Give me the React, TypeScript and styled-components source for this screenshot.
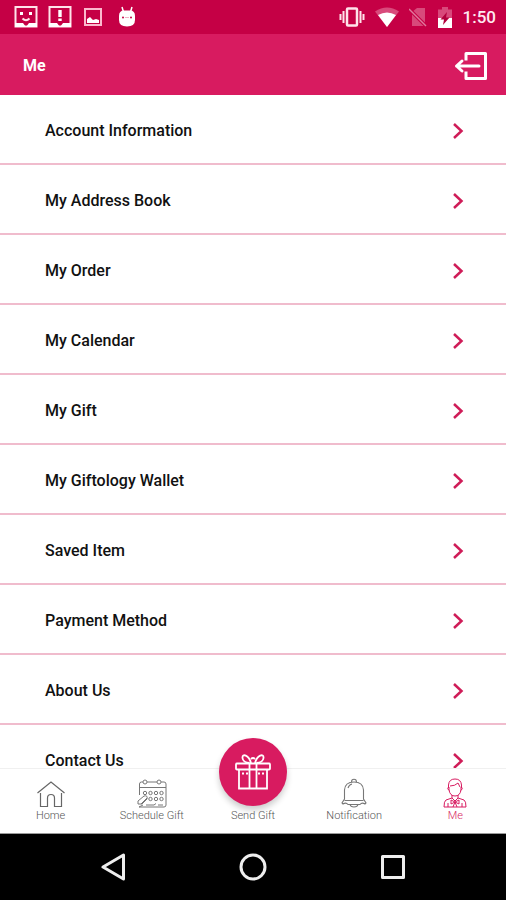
import React from "react";
import styled, { createGlobalStyle } from "styled-components";

const GlobalStyle = createGlobalStyle`
  * { box-sizing: border-box; }
  body { margin: 0; background: #fff; font-family: Roboto, "Liberation Sans", sans-serif; }
  svg { display: block; flex: none; }
`;

const brand = "#d81b60";

const Screen = styled.div`
  display: flex;
  flex-direction: column;
  height: 100vh;
  background: #fff;
`;

const StatusBar = styled.div`
  display: flex;
  justify-content: space-between;
  align-items: center;
  flex: none;
  height: 34px;
  padding: 0 10px 0 14px;
  background: #c50045;
  color: #fff;
`;

const StatusGroup = styled.div<{ $gap: number }>`
  display: flex;
  align-items: center;
  gap: ${(p) => p.$gap}px;
`;

const Clock = styled.time`
  font-size: 17px;
  font-weight: 500;
  line-height: 20px;
  color: #ffe9f0;
`;

const Header = styled.header`
  display: flex;
  justify-content: space-between;
  align-items: center;
  flex: none;
  height: 61px;
  padding: 2px 18px 0 23px;
  background: ${brand};
  color: #fff;
`;

const Title = styled.h1`
  margin: 0;
  font-size: 16px;
  font-weight: 700;
  line-height: 20px;
`;

const IconButton = styled.button`
  padding: 0;
  border: 0;
  background: none;
  color: inherit;
  cursor: pointer;
`;

const Main = styled.main`
  flex: 1;
  min-height: 0;
  overflow: hidden;
`;

const Menu = styled.ul`
  margin: 0;
  padding: 0;
  list-style: none;
`;

const MenuItem = styled.li`
  border-bottom: 2px solid #f0bccd;
`;

const MenuLink = styled.a`
  display: flex;
  justify-content: space-between;
  align-items: center;
  height: 68px;
  padding: 4px 42px 0 45px;
  color: #111;
  font-size: 16px;
  font-weight: 500;
  line-height: 16px;
  text-decoration: none;
`;

const TabBar = styled.nav`
  display: grid;
  grid-template-columns: repeat(5, 1fr);
  grid-template-rows: minmax(0, 1fr);
  position: relative;
  flex: none;
  height: 66px;
  border-top: 1px solid #f0f0f0;
  border-bottom: 1px solid #9a9a9a;
  background: #fff;
`;

const Tab = styled.a<{ $active?: boolean }>`
  display: flex;
  flex-direction: column;
  align-items: center;
  justify-content: flex-end;
  gap: 1px;
  min-height: 0;
  padding-bottom: 10px;
  color: ${(p) => (p.$active ? brand : "#555")};
  font-size: 11px;
  font-weight: 300;
  line-height: 14px;
  white-space: nowrap;
  text-decoration: none;
`;

const GiftBadge = styled.span`
  display: flex;
  align-items: center;
  justify-content: center;
  width: 68px;
  height: 68px;
  margin-bottom: 2px;
  flex: none;
  border-radius: 50%;
  background: ${brand};
  color: #fff;
  box-shadow: 0 4px 6px rgba(0, 0, 0, 0.2);
`;

const SystemBar = styled.div`
  display: grid;
  grid-template-columns: repeat(3, 140px);
  justify-content: center;
  justify-items: center;
  align-items: center;
  flex: none;
  height: 66px;
  background: #000;
  color: #eee;
`;

const menu = [
  "Account Information",
  "My Address Book",
  "My Order",
  "My Calendar",
  "My Gift",
  "My Giftology Wallet",
  "Saved Item",
  "Payment Method",
  "About Us",
  "Contact Us",
];

const SmileIcon = () => (
  <svg width="24" height="24" viewBox="0 0 24 24" fill="none" stroke="#ffe3ea" strokeWidth="2">
    <path d="M1.500 2h21v19.500h-21z" />
    <path d="M1 18h8l3 4 3-4h8v4H1z" fill="#fff" stroke="none" />
    <path d="M6 7h3v3H6zM15 7h3v3h-3z" fill="#fff" stroke="none" />
    <path d="M8.500 13.500q3.500 3.500 7 0" />
  </svg>
);

const AlertIcon = () => (
  <svg width="24" height="24" viewBox="0 0 24 24" fill="none" stroke="#ffe3ea" strokeWidth="2">
    <path d="M1.500 2h21v19.500h-21z" />
    <path d="M1 18h8l3 4 3-4h8v4H1z" fill="#fff" stroke="none" />
    <path d="M10.300 5h3.400v7h-3.400zM10.300 13.500h3.400v2.500h-3.400z" fill="#fff" stroke="none" />
  </svg>
);

const PictureIcon = () => (
  <svg width="18" height="18" viewBox="0 0 18 18" fill="none" stroke="#fbb9cd" strokeWidth="2">
    <path d="M1 1h16v16H1z" />
    <path d="M3 15v-4l3-2 3 3 3-1 3 1v3z" fill="#fff" stroke="none" />
  </svg>
);

const RobotIcon = () => (
  <svg width="18" height="22" viewBox="0 0 18 22">
    <path d="M4 1l1.500 5M14 1l-1.500 5" stroke="#fff" strokeWidth="1.500" />
    <path d="M1 10Q1 4.500 6 4.500h6q5 0 5 5.500v4q0 6.500-8 6.500T1 14z" fill="#fff" />
    <circle cx="5" cy="11.500" r="1" fill="#c50045" />
    <circle cx="13" cy="11.500" r="1" fill="#c50045" />
    <path d="M7 11.500h4" stroke="#f3b0c5" />
  </svg>
);

const VibrateIcon = () => (
  <svg width="26" height="20" viewBox="0 0 26 20" fill="none" stroke="#ffe3ea">
    <rect x="8" y="1.500" width="10" height="17" rx="1" strokeWidth="2.500" />
    <path d="M4.500 4v12M21.500 4v12" strokeWidth="2" />
    <path d="M1.500 7v6M24.500 7v6" strokeWidth="2" />
  </svg>
);

const WifiIcon = () => (
  <svg width="24" height="20" viewBox="0 0 24 20">
    <path d="M0 4.500Q12-3.500 24 4.500L12 20z" fill="#d84a7b" />
    <path d="M3 8q9-5 18 0l-9 12z" fill="#fff" />
  </svg>
);

const NoSimIcon = () => (
  <svg width="18" height="20" viewBox="0 0 18 20">
    <path d="M3 5l5-4h8v18H3z" fill="#d84a7b" />
    <path d="M0 2l17 17" stroke="#c50045" strokeWidth="3.500" />
    <path d="M0 2l17 17" stroke="#e07a9d" strokeWidth="1.500" />
  </svg>
);

const BatteryIcon = () => (
  <svg width="16" height="21" viewBox="0 0 16 21">
    <path d="M1 2.500h4V0h6v2.500h4V11H1z" fill="#d84a7b" />
    <path d="M1 11h14v10H1z" fill="#fff" />
    <path d="M10 5l-6.500 7.500H7L6 18l6.500-7.500H9z" fill="#b1003c" />
  </svg>
);

const LogoutIcon = () => (
  <svg width="34" height="30" viewBox="0 0 34 30" fill="none" stroke="currentColor" strokeWidth="3">
    <path d="M12 9.500V2.500h19.500v25H12v-7" strokeLinejoin="round" />
    <path d="M25 15H2.500M8 10L2.500 15 8 20" strokeLinecap="round" strokeLinejoin="round" />
  </svg>
);

const ChevronIcon = () => (
  <svg width="12" height="18" viewBox="0 0 12 18" fill="none" stroke="#cf1c58" strokeWidth="2.500">
    <path d="M2 2l7.500 7L2 16" />
  </svg>
);

const HomeIcon = () => (
  <svg width="30" height="28" viewBox="0 0 30 28" fill="none" stroke="#666" strokeWidth="1.200">
    <path d="M1.500 13L15 2l13.500 11" />
    <path d="M4.500 13v13.500h7V18q0-3.500 3.500-3.500t3.500 3.500v8.500h7V13" />
  </svg>
);

const ScheduleIcon = () => (
  <svg width="30" height="29" viewBox="0 0 30 29" fill="none" stroke="#777">
    <path d="M2.500 16V5q0-2 2-2H6M10 3h10M24 3h3q2 0 2 2v21q0 2-2 2H2M2.500 8.500h26.500" />
    <circle cx="8" cy="3" r="2" />
    <circle cx="22" cy="3" r="2" />
    <g>
      <circle cx="8" cy="14" r="1.700" />
      <circle cx="13.500" cy="14" r="1.700" />
      <circle cx="19" cy="14" r="1.700" />
      <circle cx="24.500" cy="14" r="1.700" />
      <circle cx="13.500" cy="20" r="1.700" />
      <circle cx="19" cy="20" r="1.700" />
      <circle cx="24.500" cy="20" r="1.700" />
    </g>
    <path d="M1 22l6-5q4-1 3 3l-5 5H1zM4 25l6-6M2 28l4-2M9 26h8l2-1.500M21 26h5" />
  </svg>
);

const GiftIcon = () => (
  <svg width="36" height="36" viewBox="0 0 36 36" fill="none" stroke="currentColor" strokeWidth="1.800">
    <rect x="1" y="9.500" width="34" height="6" rx="1" />
    <path d="M4 15.500V34.500h28V15.500M14.500 9.500v25M21.500 9.500v25" />
    <path d="M16 9C14 1 7-1 7.500 4q.5 4.500 7 5M20 9C22 1 29-1 28.500 4q-.5 4.500-7 5M16 5q2-2 4 0" />
    <path d="M7 19.500h2M11 19.500h2M23 19.500h2M27 19.500h2" />
  </svg>
);

const BellIcon = () => (
  <svg width="28" height="30" viewBox="0 0 28 30" fill="none" stroke="#777" strokeWidth="1.100">
    <path d="M11.500 4q0-2.800 2.500-2.800T16.500 4M4.500 21v-9Q5 4 14 4t9.500 8v9l2.500 4-1 1q-3-2-5 .5H8q-2-2.500-5-.5l-1-1z" />
    <path d="M8 10q1-3.500 4-4M4.500 22.500h19M10 26.500q.5 2.500 4 2.500t4-2.500" />
  </svg>
);

const PersonIcon = () => (
  <svg width="24" height="30" viewBox="0 0 24 30" fill="none" stroke={brand} strokeWidth="1">
    <path d="M5.500 10V7Q6 1 12 1t6.500 6v3M7 8q5 0 8-3l2 4" />
    <path d="M6 9v3q1 6 6 6t6-6V9M5.500 9q-2 2 .8 3.500M18.500 9q2 2-.8 3.500" />
    <path d="M9 17v3l-6 2q-2 1-2 7h22q0-6-2-7l-6-2v-3M9 20l3 3 3-3M5 25v4M19 25v4" />
    <path d="M8 22l4 2 4-2v4l-4-2-4 2zM12 24l-2 5M12 24l2 5" />
  </svg>
);

export default function App() {
  return (
    <Screen>
      <GlobalStyle />
      <StatusBar>
        <StatusGroup $gap={12}>
          <StatusGroup $gap={10}>
            <SmileIcon />
            <AlertIcon />
          </StatusGroup>
          <StatusGroup $gap={16}>
            <PictureIcon />
            <RobotIcon />
          </StatusGroup>
        </StatusGroup>
        <StatusGroup $gap={10}>
          <VibrateIcon />
          <WifiIcon />
          <NoSimIcon />
          <BatteryIcon />
          <Clock>1:50</Clock>
        </StatusGroup>
      </StatusBar>
      <Header>
        <Title>Me</Title>
        <IconButton type="button" aria-label="Log out">
          <LogoutIcon />
        </IconButton>
      </Header>
      <Main>
        <Menu>
          {menu.map((label) => (
            <MenuItem key={label}>
              <MenuLink href="#">
                {label}
                <ChevronIcon />
              </MenuLink>
            </MenuItem>
          ))}
        </Menu>
      </Main>
      <TabBar>
        <Tab href="#"><HomeIcon />Home</Tab>
        <Tab href="#"><ScheduleIcon />Schedule Gift</Tab>
        <Tab href="#"><GiftBadge><GiftIcon /></GiftBadge>Send Gift</Tab>
        <Tab href="#"><BellIcon />Notification</Tab>
        <Tab href="#" $active aria-current="page"><PersonIcon />Me</Tab>
      </TabBar>
      <SystemBar>
        <IconButton type="button" aria-label="Back">
          <svg width="26" height="28" viewBox="0 0 26 28" fill="none" stroke="currentColor" strokeWidth="3" strokeLinejoin="round">
            <path d="M23.500 2v24L3 14z" />
          </svg>
        </IconButton>
        <IconButton type="button" aria-label="Home screen">
          <svg width="28" height="28" viewBox="0 0 28 28" fill="none" stroke="currentColor" strokeWidth="3">
            <circle cx="14" cy="14" r="12" />
          </svg>
        </IconButton>
        <IconButton type="button" aria-label="Recent apps">
          <svg width="26" height="26" viewBox="0 0 26 26" fill="none" stroke="currentColor" strokeWidth="3" strokeLinejoin="round">
            <path d="M2.500 2.500h21v21h-21z" />
          </svg>
        </IconButton>
      </SystemBar>
    </Screen>
  );
}
